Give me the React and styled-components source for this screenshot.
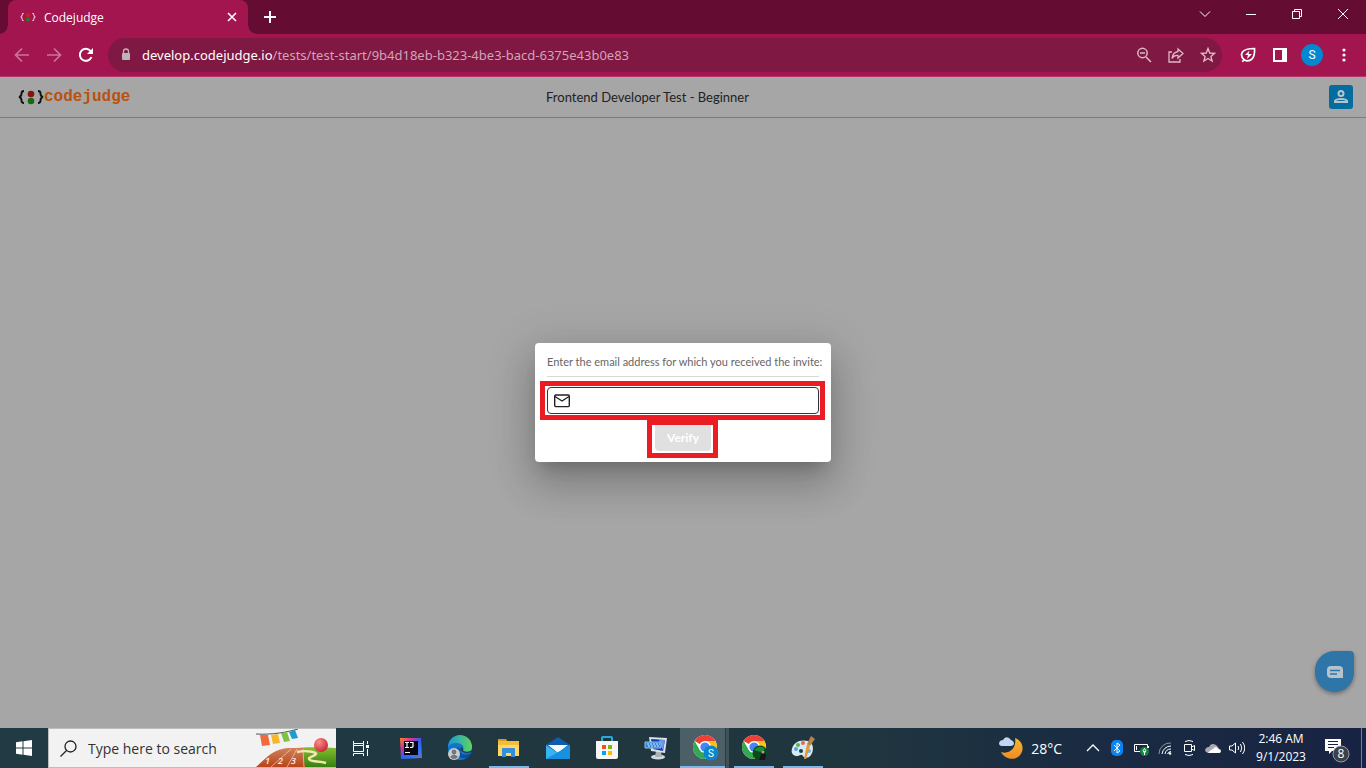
import React from 'react'
import styled, {createGlobalStyle} from 'styled-components'

const GlobalStyle = createGlobalStyle`
  * {
    box-sizing: border-box;
  }
  body {
    margin: 0;
    font-family: 'Open Sans', 'Noto Sans', sans-serif;
    font-size: 12px;
  }
  button {
    border: 0;
    padding: 0;
    background: none;
    color: inherit;
    font: inherit;
  }
  svg {
    display: block;
    flex: none;
  }
`

const Screen = styled.div`
  display: flex;
  flex-direction: column;
  min-height: 100vh;
`

/* browser window */

const TitleBar = styled.div`
  display: flex;
  height: 34px;
  padding-left: 8px;
  background: #640c32;
  color: #fff;
`

const Tab = styled.div`
  position: relative;
  display: flex;
  align-items: center;
  width: 240px;
  padding: 0 9px 0 12px;
  border-radius: 8px 8px 0 0;
  background: #a2154f;

  &::before,
  &::after {
    content: '';
    position: absolute;
    bottom: 0;
    width: 8px;
    height: 8px;
  }
  &::before {
    right: 100%;
    background: radial-gradient(circle at 0 0, #640c32 7px, #a2154f 8px);
  }
  &::after {
    left: 100%;
    background: radial-gradient(circle at 100% 0, #640c32 7px, #a2154f 8px);
  }
`

const TabTitle = styled.span`
  flex: 1;
  padding-left: 8px;
  font-size: 12px;
`

const IconButton = styled.button`
  display: flex;
  align-items: center;
  justify-content: center;
  width: ${(props) => props.$width || 32}px;
  height: ${(props) => props.$height || 32}px;
`

const WindowButtons = styled.div`
  display: flex;
  margin-left: auto;
`

const Toolbar = styled.div`
  display: flex;
  align-items: center;
  height: 43px;
  padding: 0 6px;
  border-bottom: 1px solid #b8336b;
  background: #a2154f;
  color: #fff;
`

const AddressBar = styled.div`
  display: flex;
  flex: 1;
  align-items: center;
  gap: 4px;
  height: 34px;
  margin: 0 10px 0 6px;
  padding-left: 12px;
  border-radius: 17px;
  background: #7f1843;
  color: #dfb9c8;
`

const AddressText = styled.div`
  flex: 1;
  padding-left: 6px;
  color: #d3a3b6;
  font-family: 'Noto Sans', sans-serif;
  font-size: 13px;
  white-space: nowrap;

  b {
    color: #fff;
    font-weight: 400;
  }
`

const Avatar = styled.button`
  width: 22px;
  height: 22px;
  margin: 0 5px;
  border-radius: 50%;
  background: #0288d1;
  font-family: Roboto, sans-serif;
  font-size: 12px;
`

/* page */

const Page = styled.main`
  position: relative;
  display: flex;
  flex: 1;
  flex-direction: column;
  background: #a6a6a6;
`

const Header = styled.header`
  display: grid;
  grid-template-columns: 1fr auto 1fr;
  align-items: center;
  height: 41px;
  padding: 0 13px 0 18px;
  border-bottom: 1px solid #7b7b7b;
`

const Logo = styled.a`
  display: flex;
  align-items: center;
  color: #b8520f;
  font-family: 'Liberation Mono', monospace;
  font-size: 16px;
  font-weight: 700;
  line-height: 20px;
  text-decoration: none;
`

const TestTitle = styled.h1`
  margin: 0 76px 0 0;
  color: #222;
  font-family: Lato, sans-serif;
  font-size: 13px;
  font-weight: 400;
`

const ProfileButton = styled.button`
  display: flex;
  align-items: center;
  justify-content: center;
  justify-self: end;
  width: 24px;
  height: 24px;
  border-radius: 3px;
  background: #056c9f;
`

const DialogLayer = styled.div`
  position: absolute;
  inset: 0;
  display: flex;
  align-items: center;
  justify-content: center;
`

const Dialog = styled.form`
  display: flex;
  flex-direction: column;
  align-items: center;
  padding: 12px 12px 4px;
  border-radius: 4px;
  background: #fff;
  box-shadow: 0 11px 15px -7px rgba(0, 0, 0, 0.2),
    0 24px 38px 3px rgba(0, 0, 0, 0.14), 0 9px 46px 8px rgba(0, 0, 0, 0.12);
  font-family: Lato, sans-serif;
`

const DialogLabel = styled.label`
  width: 272px;
  margin-bottom: 4px;
  padding-bottom: 7px;
  border-bottom: 1px solid #d9d9d9;
  color: #666;
  font-size: 11px;
  line-height: 14px;
  white-space: nowrap;
`

const Highlight = styled.div`
  margin: 0 -6px 0 -7px;
  padding: ${(props) => props.$padding};
  border: 5px solid #ec1c24;
`

const Field = styled.div`
  display: flex;
  align-items: center;
  width: 272px;
  height: 27px;
  padding-left: 6px;
  border: 1px solid #33333f;
  border-radius: 4px;

  input {
    flex: 1;
    min-width: 0;
    margin-left: 8px;
    border: 0;
    outline: 0;
    background: none;
    font: 12px Lato, sans-serif;
  }
`

const VerifyButton = styled.button`
  display: block;
  width: 56px;
  height: 26px;
  border-radius: 0 0 4px 4px;
  background: #e0e0e0;
  color: #fff;
  font-size: 12px;
  font-weight: 700;
  line-height: 24px;
`

const ChatButton = styled.button`
  position: absolute;
  right: 12px;
  bottom: 36px;
  display: flex;
  align-items: center;
  justify-content: center;
  width: 39px;
  height: 41px;
  border-radius: 20px 4px 20px 20px;
  background: #3075a7;
  box-shadow: 0 2px 4px rgba(0, 0, 0, 0.35);
`

/* taskbar */

const Taskbar = styled.footer`
  display: flex;
  height: 40px;
  background: linear-gradient(90deg, #213a43 0%, #20363f 62%, #1a2c42 78%, #182343 100%);
  color: #fff;
`

const Search = styled.label`
  display: flex;
  align-items: center;
  width: 288px;
  padding-left: 11px;
  border: 1px solid #bdbdbd;
  border-right: 0;
  background: #f2f2f2;

  input {
    flex: 1;
    min-width: 0;
    margin-left: 11px;
    padding: 0;
    border: 0;
    outline: 0;
    background: none;
    color: #333;
    font: 14px 'Open Sans', sans-serif;
  }
  input::placeholder {
    color: #333;
    opacity: 1;
  }
`

const Apps = styled.nav`
  display: flex;
  padding-left: 2px;
`

const AppButton = styled.button`
  display: flex;
  align-items: center;
  justify-content: center;
  width: 49px;
  height: 40px;
  box-shadow: ${(props) => (props.$active ? 'inset -3px 0 #3f5058, inset -4px 0 #2a3b43' : 'none')};
  background: ${(props) => {
    if (props.$active) return 'linear-gradient(#79b8ea, #79b8ea) bottom / 100% 2px no-repeat, #4c5f67'
    if (props.$open) return 'linear-gradient(#79b8ea, #79b8ea) bottom / 40px 2px no-repeat'
    return 'none'
  }};
`

const Weather = styled.button`
  display: flex;
  align-items: center;
  gap: 8px;
  margin-left: auto;
  padding-right: 19px;
  font-size: 14px;
`

const Clock = styled.button`
  width: 64px;
  font-size: 12px;
  line-height: 18px;
`

const Notifications = styled.button`
  display: flex;
  align-items: center;
  justify-content: center;
  width: 48px;
`

const ShowDesktop = styled.button`
  width: 5px;
  border-left: 1px solid #77809a;
`

const Line = ({size = 16, stroke = 1, children}) => (
  <svg
    width={size}
    height={size}
    viewBox={`0 0 ${size} ${size}`}
    fill="none"
    stroke="currentColor"
    strokeWidth={stroke}>
    {children}
  </svg>
)

const Brackets = ({dark, width, height}) => (
  <svg width={width} height={height} viewBox="0 0 26 16" fill="none">
    <path
      d="M6 2C3.8 2 3.5 3 3.5 4.5C3.5 6.5 3.2 7.6 1 8C3.2 8.4 3.5 9.5 3.5 11.5C3.5 13 3.8 14 6 14M20 2C22.2 2 22.5 3 22.5 4.5C22.5 6.5 22.8 7.6 25 8C22.8 8.4 22.5 9.5 22.5 11.5C22.5 13 22.2 14 20 14"
      stroke={dark ? '#111' : '#e7bfd0'}
      strokeWidth="1.9"
    />
    <circle cx="13" cy="5" r="3.3" fill={dark ? '#8b1111' : '#d71920'} />
    <circle cx="13" cy="12" r="3.3" fill={dark ? '#136b13' : '#257a25'} />
  </svg>
)

const ChromeLogo = ({children}) => (
  <svg width="28" height="26" viewBox="-2 0 28 26">
    <circle cx="12" cy="12" r="12" fill="#fff" />
    <path d="M12 12L1.6 6A12 12 0 0 1 22.4 6Z" fill="#ea4335" />
    <path d="M12 12V6H22.4A12 12 0 0 1 12 24L17.2 15Z" fill="#fbc116" />
    <path d="M12 24L17.2 15L12 12L6.8 15L1.6 6A12 12 0 0 0 12 24Z" fill="#34a853" />
    <circle cx="12" cy="12" r="6" fill="#fff" />
    <circle cx="12" cy="12" r="4.6" fill="#4285f4" />
    {children}
  </svg>
)

const SearchArt = () => (
  <svg width="80" height="38" viewBox="0 0 80 38">
    <defs>
      <linearGradient id="grass" x1="0" y1="0" x2="0" y2="1">
        <stop offset="0" stopColor="#86bd30" />
        <stop offset="1" stopColor="#35820f" />
      </linearGradient>
      <linearGradient id="track" x1="0" y1="0" x2="0" y2="1">
        <stop offset="0" stopColor="#cf8159" />
        <stop offset="1" stopColor="#b8441b" />
      </linearGradient>
      <radialGradient id="ball" cx="0.35" cy="0.3" r="0.8">
        <stop offset="0" stopColor="#ff8d83" />
        <stop offset="1" stopColor="#c11f31" />
      </radialGradient>
    </defs>
    <path d="M28 20C46 18 64 18 80 19V38H28Z" fill="url(#grass)" />
    <path d="M0 38C12 27 18 20 33 19H47L49 38Z" fill="url(#track)" />
    <path d="M15 38L35 20M31 38L41 20M48 38L47 20" stroke="#f3d2bd" strokeWidth="0.7" fill="none" />
    <path
      d="M41 23C50 21 61 23 60 25C58 28 50 28 54 31C57 33 64 32 70 34"
      fill="none"
      stroke="#f2e6b4"
      strokeWidth="2.4"
    />
    <circle cx="65" cy="16" r="7" fill="url(#ball)" />
    <path d="M0 5C16 6 32 3 42 0" fill="none" stroke="#555" />
    <path d="M4 6L12 6L14 16L6 17Z" fill="#f06a3c" />
    <path d="M15 6L22 5L24 14L17 15Z" fill="#f8b62d" />
    <path d="M25 4L31 3L34 12L28 13Z" fill="#7fc243" />
    <path d="M33 3L39 1L42 9L36 10Z" fill="#219bd3" />
    <g fill="#fff0e6" fontFamily="Open Sans" fontSize="9" fontStyle="italic" fontWeight="600">
      <text x="9" y="35">1</text>
      <text x="22" y="35">2</text>
      <text x="35" y="35">3</text>
    </g>
  </svg>
)

const apps = [
  {
    name: 'IntelliJ IDEA',
    icon: (
      <svg width="22" height="22" viewBox="0 0 22 22">
        <defs>
          <linearGradient id="idea" x1="0" y1="0" x2="1" y2="1">
            <stop offset="0" stopColor="#f8852b" />
            <stop offset="0.3" stopColor="#c9359a" />
            <stop offset="0.5" stopColor="#355bf2" />
            <stop offset="0.8" stopColor="#2f7df0" />
            <stop offset="1" stopColor="#c94c7a" />
          </linearGradient>
        </defs>
        <path d="M0 1H21L22 21L1 22Z" fill="url(#idea)" />
        <rect x="4" y="4" width="14" height="14" fill="#080512" />
        <path
          d="M5 5.5H9M7 5.5V10.5M5 10.5H9M10 5.5H13V9.5Q13 10.5 10 10.5M5 15.5H10"
          fill="none"
          stroke="#fff"
          strokeWidth="1.2"
        />
      </svg>
    ),
  },
  {
    name: 'Microsoft Edge',
    icon: (
      <svg width="26" height="26" viewBox="0 0 26 26">
        <defs>
          <linearGradient id="edge" x1="0" y1="0" x2="1" y2="0">
            <stop offset="0" stopColor="#1696df" />
            <stop offset="1" stopColor="#5fd65a" />
          </linearGradient>
        </defs>
        <circle cx="13" cy="13" r="12" fill="#1374ce" />
        <path d="M1 12A12 12 0 0 1 25 12C25 17 20 18 16 16C18 12 15 8 10 8C5 8 2 10 1 12Z" fill="url(#edge)" />
        <path d="M9 14C8 19 12 24 19 23C22 22 24 20 24 18C19 21 13 20 13 15C12 12 10 12 9 14Z" fill="#0b4f9b" />
        <path d="M14 12Q12 15 16 17Q20 19 24 17L26 16V15Q21 18 16 16Q17 14 14 12Z" fill="#213a43" />
        <circle cx="7" cy="19" r="6" fill="#c9cdd0" />
        <circle cx="7" cy="17" r="2.4" fill="#72777b" />
        <path d="M3 22Q7 17 11 22Q7 26 3 22Z" fill="#72777b" />
      </svg>
    ),
  },
  {
    name: 'File Explorer',
    open: true,
    icon: (
      <svg width="24" height="22" viewBox="0 0 24 22">
        <path d="M1 2H9L11 5H1Z" fill="#d99a1d" />
        <path d="M1 4H22V19H1Z" fill="#ffd764" />
        <path d="M1 4H22V8H1Z" fill="#f3bd3e" />
        <path d="M5 20V12Q5 11 6 11H17Q18 11 18 12V20H14V16H9V20Z" fill="#348edb" />
      </svg>
    ),
  },
  {
    name: 'Mail',
    icon: (
      <svg width="24" height="24" viewBox="0 0 24 24">
        <path d="M0 9L12 1L24 9V13H0Z" fill="#0f5cad" />
        <path d="M2 9H22L12 17Z" fill="#f4f9fd" />
        <path d="M0 9L12 17L24 9V23H0Z" fill="#35b5f2" />
        <path d="M0 23L14 15L24 9V23Z" fill="#1790de" />
      </svg>
    ),
  },
  {
    name: 'Microsoft Store',
    icon: (
      <svg width="24" height="24" viewBox="0 0 24 24">
        <path d="M7 6V2Q7 1 8 1H16Q17 1 17 2V6" fill="none" stroke="#2aa8df" strokeWidth="2" />
        <path d="M1 5H23V21Q23 23 21 23H3Q1 23 1 21Z" fill="#f6f6f6" />
        <path d="M7 9H11V13H7Z" fill="#f25022" />
        <path d="M13 9H17V13H13Z" fill="#7fba00" />
        <path d="M7 15H11V19H7Z" fill="#00a4ef" />
        <path d="M13 15H17V19H13Z" fill="#ffb900" />
      </svg>
    ),
  },
  {
    name: 'On-Screen Keyboard',
    icon: (
      <svg width="24" height="24" viewBox="0 0 24 24">
        <ellipse cx="14" cy="21" rx="7" ry="2.5" fill="#d6dadd" />
        <path d="M12 15L17 16L18 21H11Z" fill="#aab2b8" />
        <path d="M5 1L23 2L21 17L7 15Z" fill="#d9e0e6" />
        <path d="M7 3L21 4L19 15L9 13Z" fill="#1632b4" />
        <path d="M15 4L21 4L19 15Z" fill="#6e8fea" />
        <path d="M1 6H17V12H1Z" fill="#2f86d2" stroke="#8fc2ec" />
        <path d="M3 8H16M4 10H15" stroke="#d4e8f8" strokeDasharray="2 1" />
      </svg>
    ),
  },
  {
    name: 'Google Chrome',
    active: true,
    icon: (
      <ChromeLogo>
        <circle cx="18" cy="18" r="7.5" fill="#0a86cc" />
        <text x="18" y="22" textAnchor="middle" fill="#fff" fontFamily="Roboto" fontSize="10">S</text>
      </ChromeLogo>
    ),
  },
  {
    name: 'Google Chrome, second profile',
    open: true,
    icon: (
      <ChromeLogo>
        <circle cx="18" cy="18" r="7.5" fill="#0b4a1c" />
        <path d="M12 15Q18 9 23 14L19 17L15 16Z" fill="#1c8b31" />
        <path d="M17 25L19 19L22 16L24 20L23 25Z" fill="#15171a" />
        <circle cx="21" cy="17" r="1.5" fill="#a6a09a" />
      </ChromeLogo>
    ),
  },
  {
    name: 'Paint',
    open: true,
    icon: (
      <svg width="26" height="26" viewBox="0 0 26 26">
        <path d="M2 14C3 7 11 4 18 6C24 8 24 16 21 20C18 24 14 23 13 21C11 18 9 22 6 21C2 20 1 17 2 14Z" fill="#d8eaf5" />
        <circle cx="6" cy="14" r="2" fill="#55a3e2" />
        <circle cx="8" cy="10" r="2" fill="#5bb34c" />
        <circle cx="13" cy="8" r="2" fill="#ed6a45" />
        <circle cx="19" cy="16" r="2" fill="#6bb5e8" />
        <circle cx="11" cy="16" r="2" fill="#213a43" />
        <path d="M21 1L25 4L20 11L17 9Z" fill="#b98249" />
        <path d="M17 9L20 11L16 24L14 24Z" fill="#e89631" />
      </svg>
    ),
  },
]

const trayIcons = [
  {
    name: 'Show hidden icons',
    icon: <Line stroke={1.3}><path d="M2 11L8 5L14 11" /></Line>,
  },
  {
    name: 'Bluetooth',
    icon: (
      <Line>
        <rect x="2" y="0" width="12" height="16" rx="5" fill="#0b84f3" stroke="none" />
        <path d="M5 5L11 11L8 13V3L11 5L5 11" />
      </Line>
    ),
  },
  {
    name: 'Battery',
    icon: (
      <Line>
        <path d="M8 11.5H1.5V4.5H14.5V8M15.5 6V8M3.5 6V10" />
        <circle cx="11.5" cy="11.5" r="4.5" fill="#12853b" stroke="none" />
        <path d="M11.5 15V11M11.5 8.5Q8.5 11 11.5 13Q14.5 11 11.5 8.5Z" />
      </Line>
    ),
  },
  {
    name: 'Wi-Fi',
    icon: (
      <Line>
        <path d="M2 14A11 11 0 0 1 14 3" opacity="0.5" />
        <path d="M5 14A9 9 0 0 1 14 6M8 14A6 6 0 0 1 14 9M10.5 14A4 4 0 0 1 14 11.5" />
        <circle cx="13" cy="13.5" r="1.3" fill="currentColor" stroke="none" />
      </Line>
    ),
  },
  {
    name: 'Meet Now',
    icon: (
      <Line>
        <path d="M3.5 4.5H10.5V11.5H3.5ZM10.5 7L13.5 5.5V10.5L10.5 9M4 1.5Q8 -0.5 12 1.5M4 14.5Q8 16.5 12 14.5" />
      </Line>
    ),
  },
  {
    name: 'OneDrive',
    icon: (
      <Line>
        <path d="M3 13Q0 12 0 10Q1 7 4 7Q6 2 11 5Q15 8 15 13Z" fill="#a9abb0" stroke="none" />
        <path d="M3 13Q5 10 8 9Q11 5 13 9Q16 9 16 11Q16 13 14 13Z" fill="#fff" stroke="none" />
      </Line>
    ),
  },
  {
    name: 'Volume',
    icon: (
      <Line>
        <path d="M0.5 6V10H3L6.5 13V3L3 6ZM9 6Q10.5 8 9 10M11.5 4Q14 8 11.5 12M13.5 2Q18 8 13.5 14" />
      </Line>
    ),
  },
]

const Browser = () => (
  <>
    <TitleBar>
      <Tab>
        <Brackets width={16} height={10} />
        <TabTitle>Codejudge</TabTitle>
        <IconButton $width={14} aria-label="Close tab">
          <Line size={10} stroke={1.6}><path d="M1 1L9 9M9 1L1 9" /></Line>
        </IconButton>
      </Tab>
      <IconButton $width={44} $height={34} aria-label="New tab">
        <Line size={12} stroke={2}><path d="M6 0V12M0 6H12" /></Line>
      </IconButton>
      <WindowButtons>
        <IconButton $width={46} $height={28} aria-label="Search tabs">
          <Line size={12}><path d="M1 3.5L6 8.5L11 3.5" /></Line>
        </IconButton>
        <IconButton $width={46} $height={28} aria-label="Minimize">
          <Line size={10}><path d="M0 5.5H10" /></Line>
        </IconButton>
        <IconButton $width={46} $height={28} aria-label="Restore">
          <Line size={10}><path d="M0.5 2.5H7.5V9.5H0.5ZM2.5 2.5V0.5H9.5V7.5H7.5" /></Line>
        </IconButton>
        <IconButton $width={46} $height={28} aria-label="Close">
          <Line size={10}><path d="M0 0L10 10M10 0L0 10" /></Line>
        </IconButton>
      </WindowButtons>
    </TitleBar>

    <Toolbar>
      <IconButton aria-label="Back" disabled>
        <svg width="16" height="16" viewBox="0 0 16 16" fill="none" stroke="#cb7499" strokeWidth="1.7">
          <path d="M15 8H2M8 1.5L1.5 8L8 14.5" />
        </svg>
      </IconButton>
      <IconButton aria-label="Forward" disabled>
        <svg width="16" height="16" viewBox="0 0 16 16" fill="none" stroke="#cb7499" strokeWidth="1.7">
          <path d="M1 8H14M8 1.5L14.5 8L8 14.5" />
        </svg>
      </IconButton>
      <IconButton aria-label="Reload">
        <Line stroke={2}>
          <path d="M13.5 10A6 6 0 1 1 12.5 4L14 5.5" />
          <path d="M15 1V7H9Z" fill="currentColor" stroke="none" />
        </Line>
      </IconButton>
      <AddressBar>
        <svg width="12" height="14" viewBox="0 0 12 14" fill="none">
          <rect x="2" y="5" width="8" height="7" rx="1" fill="#bcb4b9" />
          <path d="M3.5 6V3.5A2.5 2.5 0 0 1 8.5 3.5V6" stroke="#bcb4b9" strokeWidth="1.3" />
        </svg>
        <AddressText>
          <b>develop.codejudge.io</b>/tests/test-start/9b4d18eb-b323-4be3-bacd-6375e43b0e83
        </AddressText>
        <IconButton $width={28} aria-label="Zoom">
          <Line stroke={1.5}><path d="M10 10L15 15M4 6H9" /><circle cx="6.5" cy="6" r="4.7" /></Line>
        </IconButton>
        <IconButton $width={28} aria-label="Share">
          <Line stroke={1.3}>
            <path d="M4 5H1V15H12V12M10 2L15 6.5L10 11V8.5Q6 8 4 11.5Q4.5 5.5 10 4.5Z" />
          </Line>
        </IconButton>
        <IconButton $width={28} aria-label="Bookmark">
          <Line stroke={1.4}>
            <path d="M8 1.5L9.8 6L14.6 6.3L10.9 9.4L12.1 14L8 11.5L3.9 14L5.1 9.4L1.4 6.3L6.2 6Z" />
          </Line>
        </IconButton>
      </AddressBar>
      <IconButton aria-label="Energy saver">
        <Line stroke={1.7}>
          <path d="M2 14.5Q4 14 4 12.5M4 12.5Q0 9 2.5 5Q5 1.5 14.5 1.5Q15 9 12 12Q8 15.5 4 12.5Z" />
          <path d="M9.5 3.5L5 8H8L7 12L12 7H8.5Z" fill="currentColor" stroke="none" />
        </Line>
      </IconButton>
      <IconButton aria-label="Side panel">
        <Line stroke={2}>
          <path d="M2 2H14V14H2Z" />
          <path d="M10 2H14V14H10Z" fill="currentColor" stroke="none" />
        </Line>
      </IconButton>
      <Avatar>S</Avatar>
      <IconButton aria-label="Menu">
        <svg width="4" height="14" viewBox="0 0 4 14" fill="#fff">
          <circle cx="2" cy="2" r="1.6" />
          <circle cx="2" cy="7" r="1.6" />
          <circle cx="2" cy="12" r="1.6" />
        </svg>
      </IconButton>
    </Toolbar>
  </>
)

const TestPage = () => (
  <Page>
    <Header>
      <Logo href="#">
        <Brackets dark width={26} height={16} />
        codejudge
      </Logo>
      <TestTitle>Frontend Developer Test - Beginner</TestTitle>
      <ProfileButton aria-label="Profile">
        <svg width="16" height="16" viewBox="0 0 16 16" fill="none" stroke="#b7c3ca" strokeWidth="2">
          <circle cx="8" cy="4.5" r="2.5" />
          <path d="M2 13V12Q3 10 8 10Q13 10 14 12V13Z" />
        </svg>
      </ProfileButton>
    </Header>

    <DialogLayer>
      <Dialog onSubmit={(e) => e.preventDefault()}>
        <DialogLabel htmlFor="email">
          Enter the email address for which you received the invite:
        </DialogLabel>
        <Highlight $padding="1px 1px 1px 2px">
          <Field>
            <svg width="16" height="14" viewBox="0 0 16 14" fill="none" stroke="#222" strokeWidth="1.4">
              <rect x="0.7" y="1" width="14.6" height="11.6" rx="1" />
              <path d="M1 2.5L8 7L15 2.5" />
            </svg>
            <input id="email" type="email" />
          </Field>
        </Highlight>
        <Highlight $padding="0 2px 2px 3px">
          <VerifyButton disabled>Verify</VerifyButton>
        </Highlight>
      </Dialog>
    </DialogLayer>

    <ChatButton aria-label="Chat">
      <svg width="18" height="14" viewBox="0 0 18 14" fill="none">
        <path d="M5 1H13Q17 1 17 5V13H5Q1 13 1 9V5Q1 1 5 1Z" fill="#b7c3cc" />
        <path d="M4 5.5H14M4 9H11" stroke="#3075a7" strokeWidth="1.4" />
      </svg>
    </ChatButton>
  </Page>
)

const DesktopBar = () => (
  <Taskbar>
    <IconButton $width={48} $height={40} aria-label="Start">
      <svg width="16" height="16" viewBox="0 0 16 16" fill="#fff">
        <path d="M0 2.3L6.5 1.3V7.5H0ZM7.5 1.2L16 0V7.5H7.5ZM0 8.5H6.5V14.7L0 13.7ZM7.5 8.5H16V16L7.5 14.8Z" />
      </svg>
    </IconButton>
    <Search>
      <svg width="17" height="17" viewBox="0 0 17 17" fill="none" stroke="#222" strokeWidth="1.3">
        <circle cx="10.5" cy="6.5" r="5.5" />
        <path d="M6.5 10.5L0.5 16.5" />
      </svg>
      <input aria-label="Search" placeholder="Type here to search" />
      <SearchArt />
    </Search>
    <IconButton $width={48} $height={40} aria-label="Task view">
      <Line size={17}>
        <path d="M1.5 1V3.5H11.5V1M1.5 5.5H11.5V11.5H1.5ZM1.5 3.5V5.5M11.5 3.5V5.5M1.5 16V13.5H11.5V16M15.5 1V4M15.5 9V16" />
        <rect x="14" y="5" width="3" height="3" fill="currentColor" stroke="none" />
      </Line>
    </IconButton>
    <Apps>
      {apps.map((app) => (
        <AppButton key={app.name} aria-label={app.name} $open={app.open} $active={app.active}>
          {app.icon}
        </AppButton>
      ))}
    </Apps>
    <Weather>
      <svg width="24" height="24" viewBox="0 0 24 24">
        <defs>
          <linearGradient id="moon" x1="0" y1="0" x2="0" y2="1">
            <stop offset="0" stopColor="#f8b830" />
            <stop offset="1" stopColor="#ee8c22" />
          </linearGradient>
        </defs>
        <path d="M16 2C25 5 26 16 19 21C13 25 5 22 2 16C11 19 18 11 16 2Z" fill="url(#moon)" />
        <path d="M3 10Q0 10 0 7Q1 4 4 4Q6 0 10 2L12 4Q15 5 15 8Q14 10 12 10Z" fill="#c3d5f3" />
      </svg>
      28°C
    </Weather>
    {trayIcons.map((item) => (
      <IconButton key={item.name} $width={24} $height={40} aria-label={item.name}>
        {item.icon}
      </IconButton>
    ))}
    <Clock>
      2:46 AM
      <br />
      9/1/2023
    </Clock>
    <Notifications aria-label="Notifications">
      <svg width="26" height="30" viewBox="0 0 26 30">
        <path d="M1 6H17V18H8L5 21V18H1Z" fill="#fff" />
        <path d="M4 8.5H14M4 11.5H14M4 14.5H10" stroke="#182343" />
        <circle cx="17" cy="21" r="8" fill="#3c4148" stroke="#969ba3" />
        <text x="17" y="25" textAnchor="middle" fill="#fff" fontFamily="Open Sans" fontSize="12">8</text>
      </svg>
    </Notifications>
    <ShowDesktop aria-label="Show desktop" />
  </Taskbar>
)

const App = () => (
  <Screen>
    <GlobalStyle />
    <Browser />
    <TestPage />
    <DesktopBar />
  </Screen>
)

export default App
